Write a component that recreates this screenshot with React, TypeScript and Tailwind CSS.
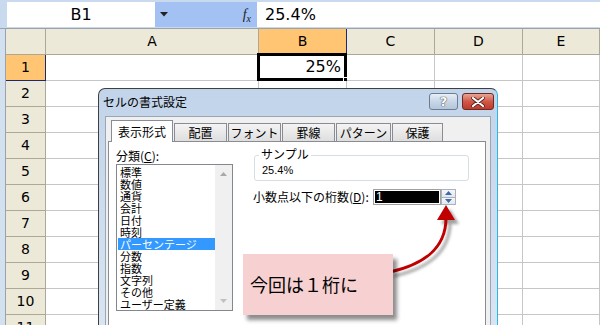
import React from "react";

const cols = ["A", "B", "C", "D", "E"];
const rows = [1, 2, 3, 4, 5, 6, 7, 8, 9, 10, 11];
const categories = [
  "標準",
  "数値",
  "通貨",
  "会計",
  "日付",
  "時刻",
  "パーセンテージ",
  "分数",
  "指数",
  "文字列",
  "その他",
  "ユーザー定義",
];
const tabs = [
  { label: "配置", w: "w-[53px]" },
  { label: "フォント", w: "w-[53px]" },
  { label: "罫線", w: "w-[53px]" },
  { label: "パターン", w: "w-[55px]" },
  { label: "保護", w: "w-[51px]" },
];

const jp = "font-['Noto_Sans_CJK_JP',sans-serif]";

function FormulaBar() {
  return (
    <div className="flex h-[29px] bg-[#c9d9ee] border-b border-[#9aa3ad]">
      <div className="w-[7px]" />
      <div className="mt-[2px] h-[25px] w-[148px] bg-white flex items-center justify-center text-[16px] font-['DejaVu_Sans',sans-serif] text-black">
        B1
      </div>
      <div className="mt-[2px] h-[25px] w-[102px] bg-[#a4c1f3] flex items-center justify-between pl-[5px] pr-[6px]">
        <svg width="8" height="5" viewBox="0 0 8 5">
          <path d="M0 0 L8 0 L4 4.5 Z" fill="#222" />
        </svg>
        <span className="italic text-[14px] font-['Liberation_Serif',serif] text-[#222]">
          f<sub className="text-[10px]">x</sub>
        </span>
      </div>
      <div className="mt-[2px] h-[25px] flex-1 bg-white flex items-center pl-[8px] text-[16px] font-['DejaVu_Sans',sans-serif] text-black">
        25.4%
      </div>
    </div>
  );
}

function Grid() {
  return (
    <div className="flex">
      <div className="w-[6px] bg-[#d3e0f0] border-r border-[#9aa3ad]" />
      <div className="grid flex-1 grid-cols-[40px_213px_88px_88px_88px_1fr] auto-rows-[26px] font-['DejaVu_Sans',sans-serif] text-[14px] text-black">
        <div className="bg-[#ece9d8] border-r border-b border-[#aca899]" />
        {cols.map((c) => (
          <div
            key={c}
            className={
              c === "B"
                ? "bg-[#ffc573] border-r border-r-[#1c2a6c] border-b border-b-[#aca899] flex items-center justify-center"
                : "bg-[#ece9d8] border-r border-b border-[#aca899] flex items-center justify-center"
            }
          >
            {c}
          </div>
        ))}
        {rows.map((r) => (
          <React.Fragment key={r}>
            <div
              className={
                r === 1
                  ? "bg-[#ffc573] border-r border-r-[#1c2a6c] border-b border-b-[#1c2a6c] flex items-center justify-center"
                  : "bg-[#ece9d8] border-r border-b border-[#aca899] flex items-center justify-center"
              }
            >
              {r}
            </div>
            {cols.map((c) => (
              <div
                key={c}
                className="relative bg-white border-r border-b border-[#c6c6c6]"
              >
                {r === 1 && c === "B" && (
                  <div className="absolute -left-[2px] -top-[2px] -right-[1px] -bottom-[1px] border-[3px] border-black flex items-center justify-end pr-[3px] text-[16px]">
                    25%
                    <div className="absolute -right-[4px] -bottom-[4px] w-[5px] h-[5px] bg-black border border-white" />
                  </div>
                )}
              </div>
            ))}
          </React.Fragment>
        ))}
      </div>
    </div>
  );
}

function TitleButtons() {
  return (
    <div className="flex gap-[4px] pt-[4px]">
      <div className="w-[29px] h-[17px] rounded-[3px] border border-[#6d7c8f] bg-gradient-to-b from-[#e7eef7] via-[#c8d6e7] to-[#b4c6dc] flex items-center justify-center">
        <span className="text-[13px] leading-none font-bold text-white [text-shadow:0_0_1px_#333,0_0_1px_#333] font-['DejaVu_Sans',sans-serif]">
          ?
        </span>
      </div>
      <div className="w-[32px] h-[17px] rounded-[3px] border border-[#6b2a22] bg-gradient-to-b from-[#e8a493] via-[#d0574a] to-[#c0392b] flex items-center justify-center">
        <svg width="14" height="10" viewBox="0 0 14 10">
          <path
            d="M2 1 L12 9 M12 1 L2 9"
            stroke="#4a1a14"
            strokeWidth="3.6"
            strokeLinecap="round"
          />
          <path
            d="M2 1 L12 9 M12 1 L2 9"
            stroke="#ffffff"
            strokeWidth="2.2"
            strokeLinecap="round"
          />
        </svg>
      </div>
    </div>
  );
}

function ListBox() {
  return (
    <div className="relative h-[147px] w-[117px] border border-[#828790] bg-white flex">
      <div className="flex-1 pt-[1px] pl-[1px] text-[11px]">
        {categories.map((c) => (
          <div
            key={c}
            className={
              c === "パーセンテージ"
                ? "h-[12px] leading-[12px] bg-[#3399ff] text-white pl-[2px]"
                : "h-[12px] leading-[12px] pl-[2px]"
            }
          >
            {c}
          </div>
        ))}
      </div>
      <div className="w-[17px] bg-[#f0f0f0] flex flex-col items-center justify-between py-[7px]">
        <svg width="7" height="4" viewBox="0 0 7 4">
          <path d="M0 4 L3.5 0 L7 4 Z" fill="#a9a9a9" />
        </svg>
        <svg width="7" height="4" viewBox="0 0 7 4">
          <path d="M0 0 L3.5 4 L7 0 Z" fill="#c0c0c0" />
        </svg>
      </div>
    </div>
  );
}

function Dialog() {
  return (
    <div
      className={`absolute left-[98px] top-[88px] w-[400px] h-[250px] rounded-t-[7px] border border-[#3f3f3f] border-r-[#2ab7e8] bg-gradient-to-b from-[#c2d4ea] to-[#d9e5f2] text-[12px] text-black ${jp}`}
    >
      <div className="flex h-[27px] justify-between pl-[4px] pr-[3px]">
        <span className="pt-[4px] text-[12px]">セルの書式設定</span>
        <TitleButtons />
      </div>
      <div className="mx-[6px] border border-[#9aa6b4] bg-[#f0f0f0] h-[230px] pt-[3px] px-[2px]">
        <div className="flex h-[21px] items-end pl-[3px]">
          <div className="relative z-10 w-[62px] h-[22px] -mb-[1px] bg-white border border-b-0 border-[#898c95] flex items-center justify-center">
            表示形式
          </div>
          {tabs.map((t) => (
            <div
              key={t.label}
              className={`${t.w} h-[18px] ml-[1px] bg-gradient-to-b from-[#f4f4f4] to-[#dedede] border border-b-0 border-[#898c95] flex items-center justify-center`}
            >
              {t.label}
            </div>
          ))}
        </div>
        <div className="h-[200px] w-[378px] bg-white border border-[#898c95] flex pl-[7px] pt-[5px]">
          <div className="flex flex-col">
            <div className="h-[17px] leading-[17px]">
              分類(<span className="underline">C</span>):
            </div>
            <ListBox />
          </div>
          <div className="ml-[21px] flex flex-col pt-[8px]">
            <div className="relative h-[26px] w-[215px] rounded-[3px] border border-[#d5dde5]">
              <span className="absolute -top-[9px] left-[4px] bg-white px-[2px] leading-[14px]">
                サンプル
              </span>
              <div className="pt-[7px] pl-[7px] leading-[14px] text-[11px] font-['Liberation_Sans',sans-serif]">
                25.4%
              </div>
            </div>
            <div className="mt-[7px] -ml-[1px] flex items-center">
              <span className="w-[120px]">
                小数点以下の桁数(<span className="underline">D</span>):
              </span>
              <div className="h-[16px] w-[68px] border border-[#a0a0a0] bg-white p-[1px]">
                <div className="h-full w-full bg-black text-white leading-[12px] pl-[1px] font-['Liberation_Sans',sans-serif] text-[12px]">
                  1
                </div>
              </div>
              <div className="h-[16px] w-[15px] border border-[#a9b2bd] flex flex-col">
                <div className="flex-1 flex items-center justify-center bg-gradient-to-b from-[#f6f7f9] to-[#e3e7ec] border-b border-[#a9b2bd]">
                  <svg width="7" height="4" viewBox="0 0 7 4">
                    <path d="M0 4 L3.5 0 L7 4 Z" fill="#3d6aa8" />
                  </svg>
                </div>
                <div className="flex-1 flex items-center justify-center bg-gradient-to-b from-[#f6f7f9] to-[#e3e7ec]">
                  <svg width="7" height="4" viewBox="0 0 7 4">
                    <path d="M0 0 L3.5 4 L7 0 Z" fill="#3d6aa8" />
                  </svg>
                </div>
              </div>
            </div>
          </div>
        </div>
      </div>
    </div>
  );
}

function Callout() {
  return (
    <>
      <svg
        className="absolute left-0 top-0"
        width="600"
        height="325"
        viewBox="0 0 600 325"
      >
        <defs>
          <filter id="sh" x="-20%" y="-20%" width="140%" height="140%">
            <feGaussianBlur stdDeviation="1.6" />
          </filter>
        </defs>
        <g transform="translate(4 4)" opacity="0.55" filter="url(#sh)">
          <path
            d="M390 272 C 425 264, 446 248, 446 218"
            stroke="#555"
            strokeWidth="3"
            fill="none"
          />
          <path d="M437 220 L446 205 L455 220 Z" fill="#555" />
        </g>
        <path
          d="M390 272 C 425 264, 446 248, 446 218"
          stroke="#c00000"
          strokeWidth="3"
          fill="none"
        />
        <path d="M437 220 L446 205 L455 220 Z" fill="#c00000" />
      </svg>
      <div
        className={`absolute left-[243px] top-[254px] w-[150px] h-[61px] bg-[#f7d1d1] shadow-[4px_5px_4px_rgba(0,0,0,0.45)] flex items-center pl-[7px] text-[18px] text-black ${jp}`}
      >
        今回は１桁に
      </div>
    </>
  );
}

export default function App() {
  return (
    <div className="relative w-[600px] h-[325px] overflow-hidden bg-white">
      <FormulaBar />
      <Grid />
      <Dialog />
      <Callout />
    </div>
  );
}
